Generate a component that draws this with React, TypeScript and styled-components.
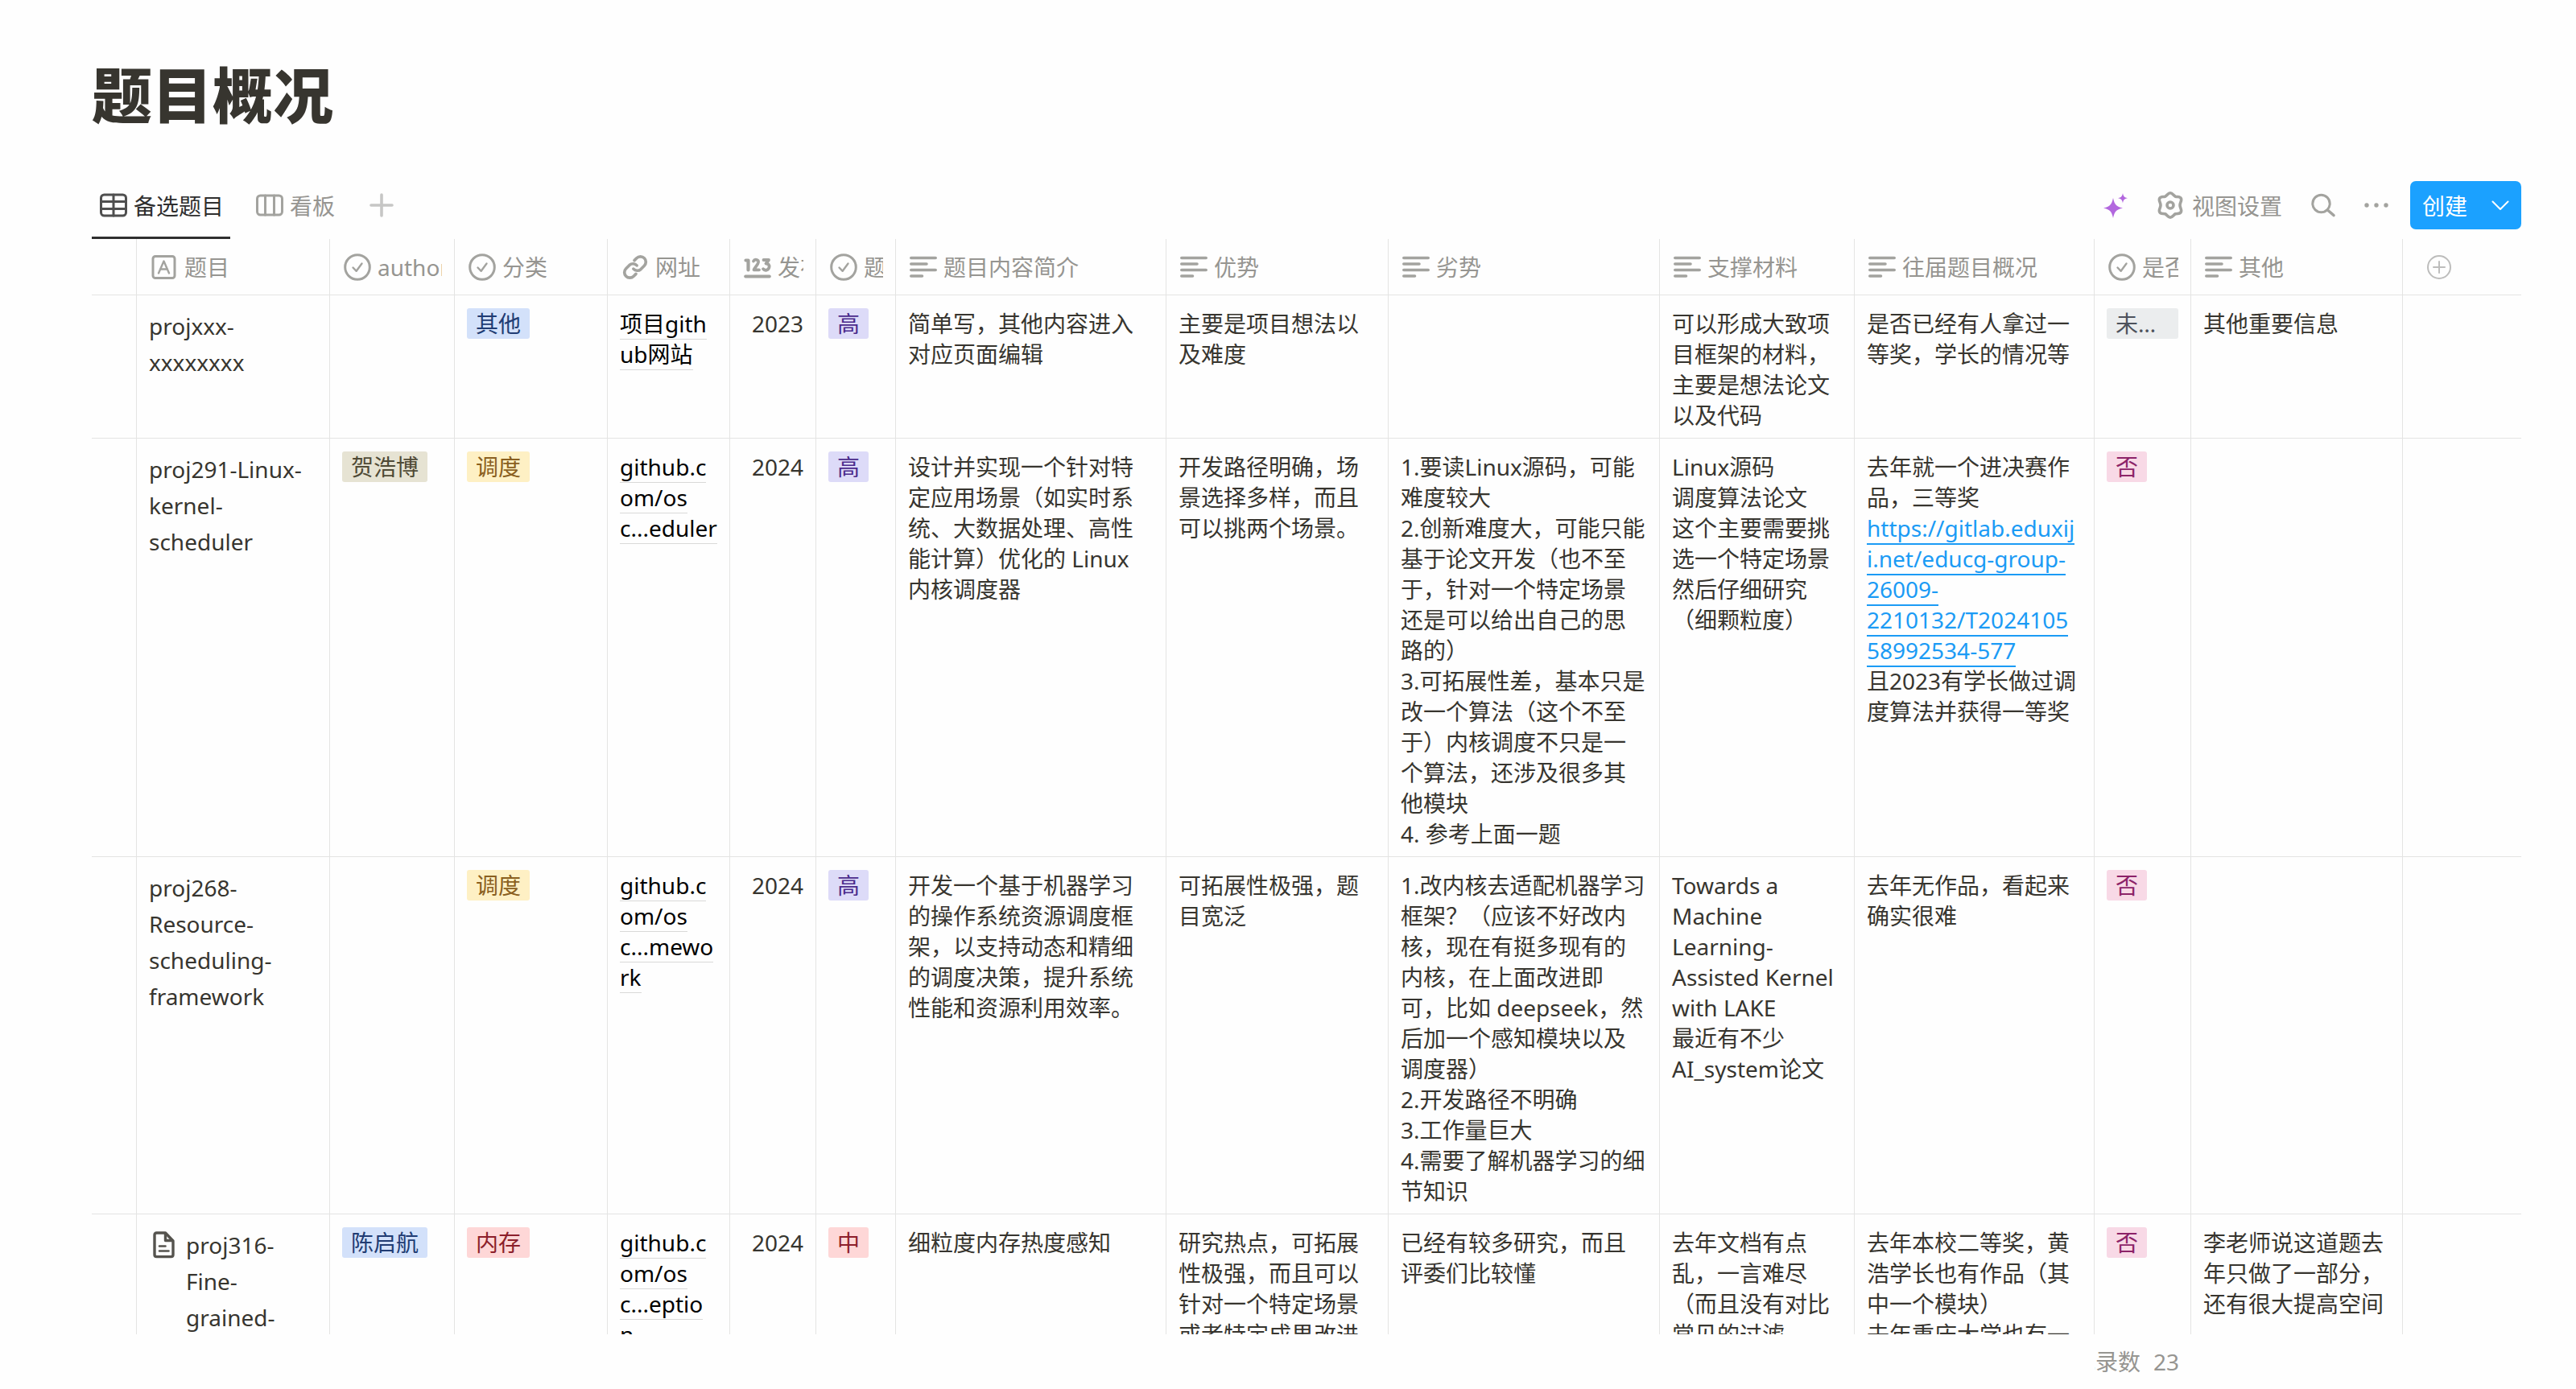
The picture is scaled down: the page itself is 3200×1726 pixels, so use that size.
import React from "react";
import styled, { createGlobalStyle } from "styled-components";

const WIDTHS = [56, 240, 155, 190, 152, 107, 99, 336, 276, 337, 242, 298, 120, 263];
const LINE = "#e4e4e3";

const GlobalStyle = createGlobalStyle`
  * { box-sizing: border-box; }
  body {
    margin: 0;
    background: #fefefe;
    color: #37352f;
    font: 28px/38px "Noto Sans", "Noto Sans CJK SC", sans-serif;
  }
`;

const Page = styled.main`
  display: flex;
  flex-direction: column;
  height: 100vh;
  padding: 0 68px 0 114px;
  overflow: hidden;
`;

const Title = styled.h1`
  margin: 0;
  padding-top: 65px;
  font-size: 75px;
  line-height: 106px;
  font-weight: 900;
`;

const Toolbar = styled.div`
  display: flex;
  justify-content: space-between;
  margin-top: 41px;
  height: 85px;
`;

const Group = styled.div`
  display: flex;
  gap: 22px;
`;

const Actions = styled.div`
  display: flex;
  align-items: center;
  gap: 35px;
  height: 85px;
`;

const plain = `
  border: 0;
  background: none;
  font: inherit;
  cursor: pointer;
`;

const Label = styled.span`
  padding-top: 3px;
`;

const Tab = styled.button<{ $active?: boolean }>`
  ${plain}
  display: flex;
  align-items: center;
  gap: 8px;
  padding: 3px 8px 0 10px;
  color: ${(p) => (p.$active ? "#2f2f2f" : "#969591")};
  border-bottom: 3px solid ${(p) => (p.$active ? "#2f2f2f" : "transparent")};
  svg { color: ${(p) => (p.$active ? "#4f4f4f" : "#a3a39f")}; }
`;

const AddTab = styled.button`
  ${plain}
  display: flex;
  align-items: center;
  padding: 0 13px;
  color: #c6c6c5;
`;

const Action = styled.button`
  ${plain}
  display: flex;
  align-items: center;
  gap: 10px;
  padding: 0;
  color: #969591;
  svg { color: #a3a39f; }
`;

const Create = styled.div`
  display: flex;
  height: 60px;
  margin-left: -8px;
  border-radius: 7px;
  background: #1ba1ff;
`;

const CreateButton = styled.button`
  ${plain}
  display: flex;
  align-items: center;
  padding: 0 15px;
  color: #fff;
`;

const Viewport = styled.div`
  flex: 1;
  min-height: 0;
  overflow: hidden;
`;

const Table = styled.table`
  width: 100%;
  table-layout: fixed;
  border-collapse: separate;
  border-spacing: 0;
`;

const HeadCell = styled.th`
  height: 70px;
  padding: 0 15px 0 17px;
  border-right: 1px solid ${LINE};
  border-bottom: 1px solid ${LINE};
  font-weight: 400;
  text-align: left;
  color: #969591;
  &:last-child { border-right: 0; }
`;

const HeadLabel = styled.div`
  display: flex;
  align-items: center;
  gap: 8px;
  overflow: hidden;
  white-space: nowrap;
  svg { flex: none; color: #a3a39f; }
`;

const AddColumn = styled.button`
  ${plain}
  display: flex;
  margin-left: 13px;
  padding: 0;
  color: #bdbdbc;
`;

const Cell = styled.td<{ $align?: "right" }>`
  padding: 16px 15px 9px;
  border-right: 1px solid ${LINE};
  border-bottom: 1px solid ${LINE};
  vertical-align: top;
  text-align: ${(p) => p.$align ?? "left"};
  white-space: pre;
  overflow: hidden;
  &:last-child { border-right: 0; }
`;

const Name = styled.div`
  display: flex;
  gap: 12px;
  line-height: 45px;
  svg { flex: none; margin-top: 5px; color: #55534e; }
`;

const TONES = {
  blue: ["#d3e1fa", "#213c73"],
  yellow: ["#fef0c4", "#8a5f20"],
  sand: ["#e6e3d3", "#4f4a35"],
  purple: ["#dddbf8", "#4b2b8c"],
  red: ["#fed7d7", "#8c1f2b"],
  grey: ["#ebedee", "#4d525c"],
  pink: ["#f8d9e6", "#8c2368"],
};
type Tone = keyof typeof TONES;

const Tag = styled.span<{ $tone: Tone }>`
  display: block;
  width: fit-content;
  max-width: 100%;
  padding: 0 11px;
  border-radius: 3px;
  overflow: hidden;
  text-overflow: ellipsis;
  background: ${(p) => TONES[p.$tone][0]};
  color: ${(p) => TONES[p.$tone][1]};
`;

const SiteLink = styled.a`
  color: #000;
  text-decoration: none;
  border-bottom: 1px solid #d9d9d8;
`;

const TextLink = styled.a`
  color: #1b9bf5;
  text-decoration: none;
  border-bottom: 2px solid #1b9bf5;
`;

const Footer = styled.footer`
  display: grid;
  grid-template-columns: ${WIDTHS.map((w) => `${w}px`).join(" ")} 1fr;
  height: 68px;
  align-items: center;
  color: #969591;
`;

const Count = styled.div`
  grid-column: 13;
  display: flex;
  justify-content: flex-end;
  gap: 16px;
  padding-right: 15px;
  overflow: hidden;
  white-space: nowrap;
`;

const Svg = ({ size = 34, sw = 3, children }: { size?: number; sw?: number; children: React.ReactNode }) => (
  <svg width={size} height={size} viewBox={`0 0 ${size} ${size}`} fill="none" stroke="currentColor"
    strokeWidth={sw} strokeLinecap="round" strokeLinejoin="round" aria-hidden="true">
    {children}
  </svg>
);

const icons = {
  text: (
    <Svg>
      <rect x="3" y="3.500" width="27" height="27" rx="3" />
      <path d="M10 24.500L16.500 9.500L23 24.500M12 19.500H21" strokeWidth="2.400" />
    </Svg>
  ),
  check: (
    <Svg>
      <circle cx="17" cy="17" r="15.300" />
      <path d="M11.500 17.500L15.700 21.800L22.500 12.500" strokeWidth="2.400" />
    </Svg>
  ),
  link: (
    <svg width="34" height="34" viewBox="0 0 24 24" fill="none" stroke="currentColor" strokeWidth="2.600"
      strokeLinecap="round" strokeLinejoin="round" aria-hidden="true">
      <path d="M10.500 13.500a4.600 4.600 0 0 0 6.500 .3l3-3a4.700 4.700 0 0 0-6.700-6.700l-2 2" />
      <path d="M13.500 10.500a4.600 4.600 0 0 0-6.500-.3l-3 3a4.700 4.700 0 0 0 6.700 6.700l2-2" />
    </svg>
  ),
  lines: (
    <Svg sw={3.6}>
      <path d="M1.800 5.500H32.200M1.800 13H21M1.800 20.500H32.200M1.800 28H15.500" />
    </Svg>
  ),
  number: (
    <Svg sw={4.2}>
      <path d="M2.100 28.500H31.900" strokeWidth="3.800" />
      <path d="M2.500 8.500H5.500V20.500" />
      <path d="M12 9.500C13.500 6.500 18.500 7.500 18 11C17.500 14 14 17 12.500 20.300H19" strokeWidth="3.800" />
      <path d="M24.500 8H31L27.500 12.500C30.500 12.300 32 14.500 31.500 17C30.800 21 26 21.800 24 19.200" strokeWidth="3.800" />
    </Svg>
  ),
  table: (
    <Svg>
      <rect x="1.500" y="4" width="31" height="26" rx="4" />
      <path d="M2 12.500H32M2 21.500H32M17 4V30" />
    </Svg>
  ),
  board: (
    <Svg>
      <rect x="1.500" y="5" width="31" height="24" rx="4" />
      <path d="M11.500 5V29M22.500 5V29" />
    </Svg>
  ),
  plus: (
    <Svg size={30} sw={3.6}>
      <path d="M15 2V28M2 15H28" />
    </Svg>
  ),
  plusCircle: (
    <Svg size={30} sw={2}>
      <circle cx="15" cy="15" r="14" />
      <path d="M15 8V22M8 15H22" />
    </Svg>
  ),
  sparkle: (
    <svg width="32" height="32" viewBox="0 0 32 32" fill="#b267de" aria-hidden="true">
      <path d="M13 7C14.800 15 16.500 17.500 25 19.500C16.500 21.500 14.800 24 13 32C11.200 24 9.500 21.500 1 19.500C9.500 17.500 11.200 15 13 7Z" />
      <path d="M25 1C25.800 5.200 26.800 6.300 31 7.200C26.800 8.100 25.800 9.200 25 13.400C24.200 9.200 23.200 8.100 19 7.200C23.200 6.300 24.200 5.200 25 1Z" />
    </svg>
  ),
  gear: (
    <Svg sw={3.6}>
      <path d="M17 1.800C20 1.800 21.200 5.300 23.500 6.200C26 7 29 5.800 30.300 8.600C31.700 11.500 29 13.500 29 17C29 20.500 31.700 22.500 30.300 25.400C29 28.200 26 27 23.500 27.800C21.200 28.700 20 32.200 17 32.200C14 32.200 12.800 28.700 10.500 27.800C8 27 5 28.200 3.700 25.400C2.300 22.500 5 20.500 5 17C5 13.500 2.300 11.500 3.700 8.600C5 5.800 8 7 10.500 6.200C12.800 5.300 14 1.800 17 1.800Z" />
      <circle cx="17" cy="17" r="4" />
    </Svg>
  ),
  search: (
    <Svg size={32}>
      <circle cx="13.500" cy="14" r="10.700" />
      <path d="M22 22.500L29 28.500" strokeWidth="3.600" />
    </Svg>
  ),
  more: (
    <svg width="30" height="30" viewBox="0 0 30 30" fill="currentColor" aria-hidden="true">
      <circle cx="3" cy="15" r="2.700" />
      <circle cx="15" cy="15" r="2.700" />
      <circle cx="27" cy="15" r="2.700" />
    </svg>
  ),
  chevron: (
    <Svg size={22} sw={2}>
      <path d="M1.500 6.500L11 16L20.500 6.500" />
    </Svg>
  ),
  doc: (
    <Svg sw={3.4}>
      <path d="M20.500 2H9.500C8 2 7 3.200 7 4.600V29C7 30.600 8 31.600 9.500 31.600H27.500C29.200 31.600 30 30.600 30 29V12Z" />
      <path d="M20.500 3V11.500H29" />
      <path d="M13 18.500H20.500M13 24.500H24.500" strokeWidth="2.600" />
    </Svg>
  ),
};

const HEADS: [keyof typeof icons, string][] = [
  ["text", "题目"], ["check", "author"], ["check", "分类"], ["link", "网址"], ["number", "发布"],
  ["check", "题目"], ["lines", "题目内容简介"], ["lines", "优势"], ["lines", "劣势"],
  ["lines", "支撑材料"], ["lines", "往届题目概况"], ["check", "是否"], ["lines", "其他"],
];

type Row = {
  name: string; doc?: boolean; author?: [Tone, string]; kind: [Tone, string]; site: string; year: string;
  heat: [Tone, string]; intro: string; pros: string; cons: string; material: string;
  past: React.ReactNode; chosen: [Tone, string]; other?: string;
};

const ROWS: Row[] = [
  {
    name: "projxxx-\nxxxxxxxx",
    kind: ["blue", "其他"],
    site: "项目gith\nub网站",
    year: "2023",
    heat: ["purple", "高"],
    intro: "简单写，其他内容进入\n对应页面编辑",
    pros: "主要是项目想法以\n及难度",
    cons: "",
    material: "可以形成大致项\n目框架的材料，\n主要是想法论文\n以及代码",
    past: "是否已经有人拿过一\n等奖，学长的情况等",
    chosen: ["grey", "未确定"],
    other: "其他重要信息",
  },
  {
    name: "proj291-Linux-\nkernel-\nscheduler",
    author: ["sand", "贺浩博"],
    kind: ["yellow", "调度"],
    site: "github.c\nom/os\nc...eduler",
    year: "2024",
    heat: ["purple", "高"],
    intro: "设计并实现一个针对特\n定应用场景（如实时系\n统、大数据处理、高性\n能计算）优化的 Linux\n内核调度器",
    pros: "开发路径明确，场\n景选择多样，而且\n可以挑两个场景。",
    cons: "1.要读Linux源码，可能\n难度较大\n2.创新难度大，可能只能\n基于论文开发（也不至\n于，针对一个特定场景\n还是可以给出自己的思\n路的）\n3.可拓展性差，基本只是\n改一个算法（这个不至\n于）内核调度不只是一\n个算法，还涉及很多其\n他模块\n4. 参考上面一题",
    material: "Linux源码\n调度算法论文\n这个主要需要挑\n选一个特定场景\n然后仔细研究\n（细颗粒度）",
    past: (
      <>
        {"去年就一个进决赛作\n品，三等奖\n"}
        <TextLink href="#gitlab">{"https://gitlab.eduxij\ni.net/educg-group-\n26009-\n2210132/T2024105\n58992534-577"}</TextLink>
        {"\n且2023有学长做过调\n度算法并获得一等奖"}
      </>
    ),
    chosen: ["pink", "否"],
  },
  {
    name: "proj268-\nResource-\nscheduling-\nframework",
    kind: ["yellow", "调度"],
    site: "github.c\nom/os\nc...mewo\nrk",
    year: "2024",
    heat: ["purple", "高"],
    intro: "开发一个基于机器学习\n的操作系统资源调度框\n架，以支持动态和精细\n的调度决策，提升系统\n性能和资源利用效率。",
    pros: "可拓展性极强，题\n目宽泛",
    cons: "1.改内核去适配机器学习\n框架？（应该不好改内\n核，现在有挺多现有的\n内核，在上面改进即\n可，比如 deepseek，然\n后加一个感知模块以及\n调度器）\n2.开发路径不明确\n3.工作量巨大\n4.需要了解机器学习的细\n节知识",
    material: "Towards a\nMachine\nLearning-\nAssisted Kernel\nwith LAKE\n最近有不少\nAI_system论文",
    past: "去年无作品，看起来\n确实很难",
    chosen: ["pink", "否"],
  },
  {
    name: "proj316-\nFine-\ngrained-",
    doc: true,
    author: ["blue", "陈启航"],
    kind: ["red", "内存"],
    site: "github.c\nom/os\nc...eptio\nn",
    year: "2024",
    heat: ["red", "中"],
    intro: "细粒度内存热度感知",
    pros: "研究热点，可拓展\n性极强，而且可以\n针对一个特定场景\n或者特定成果改进",
    cons: "已经有较多研究，而且\n评委们比较懂",
    material: "去年文档有点\n乱，一言难尽\n（而且没有对比\n常见的过滤",
    past: "去年本校二等奖，黄\n浩学长也有作品（其\n中一个模块）\n去年重庆大学也有一",
    chosen: ["pink", "否"],
    other: "李老师说这道题去\n年只做了一部分，\n还有很大提高空间",
  },
];

const renderTag = (tag?: [Tone, string]) => tag && <Tag $tone={tag[0]}>{tag[1]}</Tag>;

export default function App() {
  return (
    <Page>
      <GlobalStyle />
      <Title>题目概况</Title>
      <Toolbar>
        <Group>
          <Tab $active>{icons.table}<Label>备选题目</Label></Tab>
          <Tab>{icons.board}<Label>看板</Label></Tab>
          <AddTab aria-label="添加视图">{icons.plus}</AddTab>
        </Group>
        <Actions>
          <Action aria-label="AI">{icons.sparkle}</Action>
          <Action>{icons.gear}<Label>视图设置</Label></Action>
          <Action aria-label="搜索">{icons.search}</Action>
          <Action aria-label="更多">{icons.more}</Action>
          <Create>
            <CreateButton><Label>创建</Label></CreateButton>
            <CreateButton aria-label="更多创建选项">{icons.chevron}</CreateButton>
          </Create>
        </Actions>
      </Toolbar>
      <Viewport>
        <Table>
          <colgroup>
            {WIDTHS.map((w, i) => <col key={i} style={{ width: w }} />)}
            <col />
          </colgroup>
          <thead>
            <tr>
              <HeadCell />
              {HEADS.map(([icon, label], i) => (
                <HeadCell key={i}><HeadLabel>{icons[icon]}{label}</HeadLabel></HeadCell>
              ))}
              <HeadCell><AddColumn aria-label="添加列">{icons.plusCircle}</AddColumn></HeadCell>
            </tr>
          </thead>
          <tbody>
            {ROWS.map((r) => (
              <tr key={r.name}>
                <Cell />
                <Cell><Name>{r.doc && icons.doc}<span>{r.name}</span></Name></Cell>
                <Cell>{renderTag(r.author)}</Cell>
                <Cell>{renderTag(r.kind)}</Cell>
                <Cell><SiteLink href="#site">{r.site}</SiteLink></Cell>
                <Cell $align="right">{r.year}</Cell>
                <Cell>{renderTag(r.heat)}</Cell>
                <Cell>{r.intro}</Cell>
                <Cell>{r.pros}</Cell>
                <Cell>{r.cons}</Cell>
                <Cell>{r.material}</Cell>
                <Cell>{r.past}</Cell>
                <Cell>{renderTag(r.chosen)}</Cell>
                <Cell>{r.other}</Cell>
                <Cell />
              </tr>
            ))}
          </tbody>
        </Table>
      </Viewport>
      <Footer>
        <Count><span>记录数</span><span>23</span></Count>
      </Footer>
    </Page>
  );
}
